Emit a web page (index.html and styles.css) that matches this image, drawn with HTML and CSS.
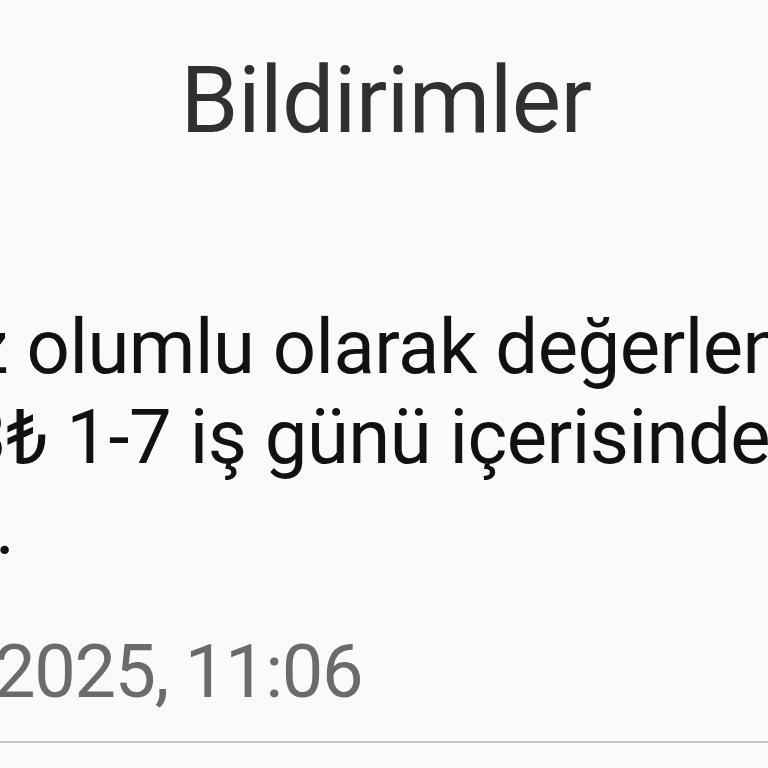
FILE: index.html
```html
<!DOCTYPE html>
<html lang="tr">
<head>
<meta charset="utf-8">
<link rel="stylesheet" href="styles.css">
</head>
<body>
<div class="screen">
  <header class="title">Bildirimler</header>
  <div class="message">
    <div class="line l1">z olumlu olarak değerlendirildi.</div>
    <div class="line l2">3₺ 1-7 iş günü içerisinde hesabınıza</div>
    <div class="line l3">.</div>
  </div>
  <div class="date">2025, 11:06</div>
  <div class="divider"></div>
</div>
</body>
</html>
```

FILE: styles.css
```css
html, body {
  margin: 0;
  padding: 0;
  background: #fafafa;
}
.screen {
  width: 768px;
  height: 768px;
  overflow: hidden;
  font-family: Roboto, "Noto Sans", sans-serif;
  display: flex;
  flex-direction: column;
}
.title {
  padding-top: 45px;
  font-size: 93px;
  line-height: 112px;
  letter-spacing: -0.6px;
  color: #303030;
  text-align: center;
  padding-left: 4px;
}
.message {
  margin-top: 145px;
  font-size: 76px;
  line-height: 90px;
  letter-spacing: -0.5px;
  color: #111111;
}
.line {
  white-space: nowrap;
}
.l1 { margin-left: -29px; }
.l2 { margin-left: -36px; }
.l3 { margin-left: -5px; }
.date {
  margin-top: 55px;
  font-size: 74px;
  line-height: 90px;
  letter-spacing: -1.4px;
  color: #6b6b6b;
  white-space: nowrap;
  margin-left: -6px;
}
.divider {
  margin-top: 24px;
  height: 2px;
  background: #c4c4c4;
  flex: none;
}
```
